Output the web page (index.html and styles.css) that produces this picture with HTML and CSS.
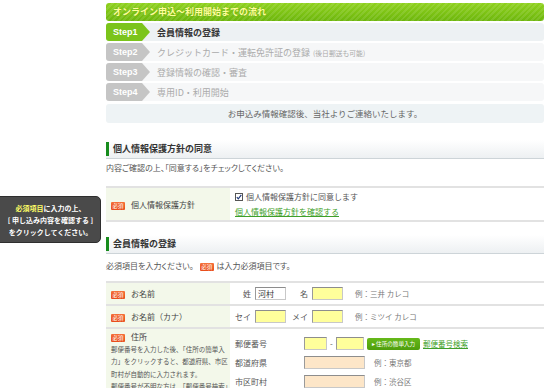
FILE: index.html
```html
<!DOCTYPE html>
<html lang="ja">
<head>
<meta charset="utf-8">
<title>会員登録</title>
<link rel="stylesheet" href="styles.css">
</head>
<body>
<div class="tip">
  <p><span class="tip-em">必須項目</span>に入力の上、</p>
  <p>[ 申し込み内容を確認する ]</p>
  <p>をクリックしてください。</p>
</div>
<main class="page">
  <div class="flow">
    <div class="flow-title">オンライン申込～利用開始までの流れ</div>
    <ol class="steps">
      <li class="step current"><span class="step-no">Step1</span><span class="step-text">会員情報の登録</span></li>
      <li class="step"><span class="step-no">Step2</span><span class="step-text">クレジットカード・運転免許証の登録<small>(後日郵送も可能)</small></span></li>
      <li class="step"><span class="step-no">Step3</span><span class="step-text">登録情報の確認・審査</span></li>
      <li class="step"><span class="step-no">Step4</span><span class="step-text">専用ID・利用開始</span></li>
    </ol>
    <p class="flow-note">お申込み情報確認後、当社よりご連絡いたします。</p>
  </div>

  <section class="sec sec-agree">
    <h2 class="sec-title">個人情報保護方針の同意</h2>
    <p class="sec-lead">内容ご確認の上、「同意する」をチェックしてください。</p>
    <table class="form form-agree">
      <tr>
        <th><span class="req">必須</span>個人情報保護方針</th>
        <td>
          <div class="agree-line"><span class="check"><svg width="8" height="8" viewBox="0 0 8 8"><rect x="0.5" y="0.5" width="7" height="7" fill="#fff" stroke="#555"/><path d="M1.8 4.1 L3.3 5.8 L6.3 1.8" fill="none" stroke="#223a7a" stroke-width="1.2"/></svg></span>個人情報保護方針に同意します</div>
          <div class="agree-line"><a class="link" href="#">個人情報保護方針を確認する</a></div>
        </td>
      </tr>
    </table>
  </section>

  <section class="sec sec-member">
    <h2 class="sec-title">会員情報の登録</h2>
    <p class="sec-lead lead-member">必須項目を入力ください。<span class="req">必須</span> は入力必須項目です。</p>
    <table class="form form-member">
      <tr>
        <th><span class="req">必須</span>お名前</th>
        <td>
          <div class="name-row">
            <span class="nm-lbl">姓</span><span class="inp inp-white inp-name">河村</span>
            <span class="nm-lbl nm-lbl2">名</span><span class="inp inp-yellow inp-name"></span>
            <span class="ex">例：三井 カレコ</span>
          </div>
        </td>
      </tr>
      <tr>
        <th><span class="req">必須</span>お名前（カナ）</th>
        <td>
          <div class="name-row">
            <span class="nm-lbl">セイ</span><span class="inp inp-yellow inp-name"></span>
            <span class="nm-lbl nm-lbl2">メイ</span><span class="inp inp-yellow inp-name"></span>
            <span class="ex">例：ミツイ カレコ</span>
          </div>
        </td>
      </tr>
      <tr class="addr">
        <th>
          <div class="addr-head"><span class="req">必須</span>住所</div>
          <p class="addr-desc">郵便番号を入力した後、「住所の簡単入力」をクリックすると、都道府県、市区町村が自動的に入力されます。<br>郵便番号が不明な方は、「郵便番号検索」をクリックしてください。</p>
        </th>
        <td>
          <div class="addr-row">
            <span class="addr-lbl">郵便番号</span>
            <span class="inp inp-yellow inp-zip1"></span><span class="dash">-</span><span class="inp inp-yellow inp-zip2"></span>
            <span class="btn-zip">▸ 住所の簡単入力</span>
            <a class="link link-zip" href="#">郵便番号検索</a>
          </div>
          <div class="addr-row">
            <span class="addr-lbl">都道府県</span>
            <span class="inp inp-peach inp-wide"></span>
            <span class="ex ex-addr">例：東京都</span>
          </div>
          <div class="addr-row">
            <span class="addr-lbl">市区町村</span>
            <span class="inp inp-peach inp-wide"></span>
            <span class="ex ex-addr">例：渋谷区</span>
          </div>
        </td>
      </tr>
    </table>
  </section>
</main>
</body>
</html>
```
FILE: styles.css
```css
* { box-sizing: border-box; }
html, body { margin: 0; padding: 0; }
body {
  background: #fff;
  font-family: "Noto Sans CJK JP", "Noto Sans", sans-serif;
  color: #555;
  font-size: 8px;
  overflow: hidden;
  height: 388px;
  position: relative;
}
p { margin: 0; }
ol { margin: 0; padding: 0; list-style: none; }
h2 { margin: 0; }

.page {
  width: 438px;
  margin-left: 106px;
  padding-top: 3px;
}

/* flow */
.flow-title {
  height: 18px;
  border-radius: 3px;
  background:
    repeating-linear-gradient(135deg, rgba(255,255,255,0.10) 0 2px, rgba(255,255,255,0) 2px 4px),
    linear-gradient(#8fd11e, #6db60c);
  color: #ffff9a;
  font-weight: bold;
  font-size: 9px;
  line-height: 18px;
  padding-left: 7px;
  text-shadow: 0 0 1px rgba(60,110,0,0.5);
}
.steps { margin-top: 2px; display: flex; flex-direction: column; gap: 2px; }
.step {
  display: flex;
  align-items: center;
  height: 18px;
  background: #f6f7f8;
  border-radius: 3px;
}
.step.current { background: #edf1f3; }
.step-no {
  flex: none;
  width: 44px;
  height: 18px;
  display: flex;
  align-items: center;
  padding-left: 7px;
  background: #c5c5c5;
  color: #fff;
  font-family: "Liberation Sans", Arial, sans-serif;
  font-weight: bold;
  font-size: 9px;
  border-radius: 3px 0 0 3px;
  clip-path: polygon(0 0, 36px 0, 44px 50%, 36px 100%, 0 100%);
}
.current .step-no { background: #7bc41b; }
.step-text {
  margin-left: 7px;
  font-size: 9px;
  color: #ababab;
}
.step-text small { font-size: 6.8px; color: #aaa; margin-left: 3px; }
.current .step-text { color: #333; font-weight: bold; }
.flow-note {
  margin-top: 3px;
  height: 19px;
  line-height: 19px;
  border-radius: 3px;
  background: #eef3f5;
  color: #666;
  font-size: 8.5px;
  text-align: center;
}

/* sections */
.sec-title {
  position: relative;
  height: 19px;
  line-height: 18px;
  padding-left: 7px;
  font-size: 9px;
  font-weight: bold;
  color: #333;
  background: linear-gradient(to bottom, #ffffff, #edf0f2);
  border-bottom: 1px solid #cdd4d8;
}
.sec-title::before {
  content: "";
  position: absolute;
  left: 0;
  top: 2px;
  bottom: 2px;
  width: 3px;
  background: #178c1d;
}
.sec-agree { margin-top: 17px; }
.sec-member { margin-top: 13px; }
.sec-lead {
  margin-top: 3px;
  line-height: 12px;
  font-size: 8px;
  color: #555;
  font-feature-settings: "palt";
}
.lead-member { margin-top: 6px; }

.req {
  display: inline-block;
  width: 14px;
  height: 8px;
  line-height: 8px;
  margin-right: 6px;
  vertical-align: 0px;
  border-radius: 1px;
  background: linear-gradient(#f5713a, #e84c1a);
  color: #fff;
  font-size: 5.5px;
  text-align: center;
}
.lead-member .req { margin-left: 6px; margin-right: 1px; }

/* tables */
.form {
  width: 100%;
  border-collapse: collapse;
}
.form-agree { margin-top: 12px; }
.form-member { margin-top: 9px; }
.form th, .form td {
  border-top: 2px solid #e2e2e2;
  border-bottom: 2px solid #e2e2e2;
  padding: 0;
  vertical-align: middle;
}
.form th {
  width: 124px;
  background: #f3f8ea;
  text-align: left;
  font-weight: normal;
  color: #444;
  font-size: 8px;
  padding-left: 5px;
}
.form td { padding-left: 5px; color: #555; }
.form-agree th, .form-agree td { height: 34px; }
.agree-line { line-height: 15px; display: flex; align-items: center; }
.check { display: inline-flex; margin-right: 3px; }
.link { color: #3f9f2a; text-decoration: underline; }

.form-member tr:not(.addr) th, .form-member tr:not(.addr) td { height: 23px; }
.name-row { display: flex; align-items: center; }
.nm-lbl { width: 20px; text-align: right; padding-right: 4px; color: #555; }
.nm-lbl2 { width: 26px; }
.inp {
  display: inline-block;
  height: 13px;
  border: 1px solid #c8c8c8;
  border-top-color: #8d8d8d;
  border-left-color: #9a9a9a;
  font-size: 8px;
  line-height: 11px;
  padding-left: 2px;
  color: #333;
}
.inp-white { background: #fff; }
.inp-yellow { background: #ffff9b; }
.inp-peach { background: #fde6c8; }
.inp-name { width: 31px; }
.ex { margin-left: 12px; color: #777; font-size: 7.5px; }

.addr th { vertical-align: top; padding-top: 2px; }
.addr-head { line-height: 12px; }
.addr-desc {
  margin-top: 0;
  font-size: 6.5px;
  line-height: 12.3px;
  color: #555;
  padding-right: 0;
}
.addr td { vertical-align: top; padding-top: 8px; }
.addr-row { display: flex; align-items: center; height: 13px; margin-bottom: 6px; }
.addr-lbl { width: 69px; color: #555; }
.inp-zip1 { width: 23px; }
.dash { width: 9px; text-align: center; color: #555; }
.inp-zip2 { width: 28px; }
.btn-zip {
  margin-left: 3px;
  height: 12px;
  width: 53px;
  border-radius: 2px;
  background: linear-gradient(#66b91a, #4e9e0c);
  color: #fff;
  font-size: 5.6px;
  line-height: 12px;
  text-align: center;
  white-space: nowrap;
}
.link-zip { margin-left: 3px; font-size: 7.5px; }
.inp-wide { width: 61px; }
.ex-addr { margin-left: 9px; }

/* tooltip overlay */
.tip {
  position: absolute;
  left: -6px;
  top: 196px;
  width: 107px;
  height: 47px;
  padding: 5px 0 0 6px;
  background: #4a4a4a;
  border: 1px solid #2e2e2e;
  border-radius: 5px;
  color: #fff;
  font-weight: bold;
  font-size: 7px;
  line-height: 12px;
  text-align: center;
  z-index: 2;
}
.tip-em { color: #ffff66; }
```
